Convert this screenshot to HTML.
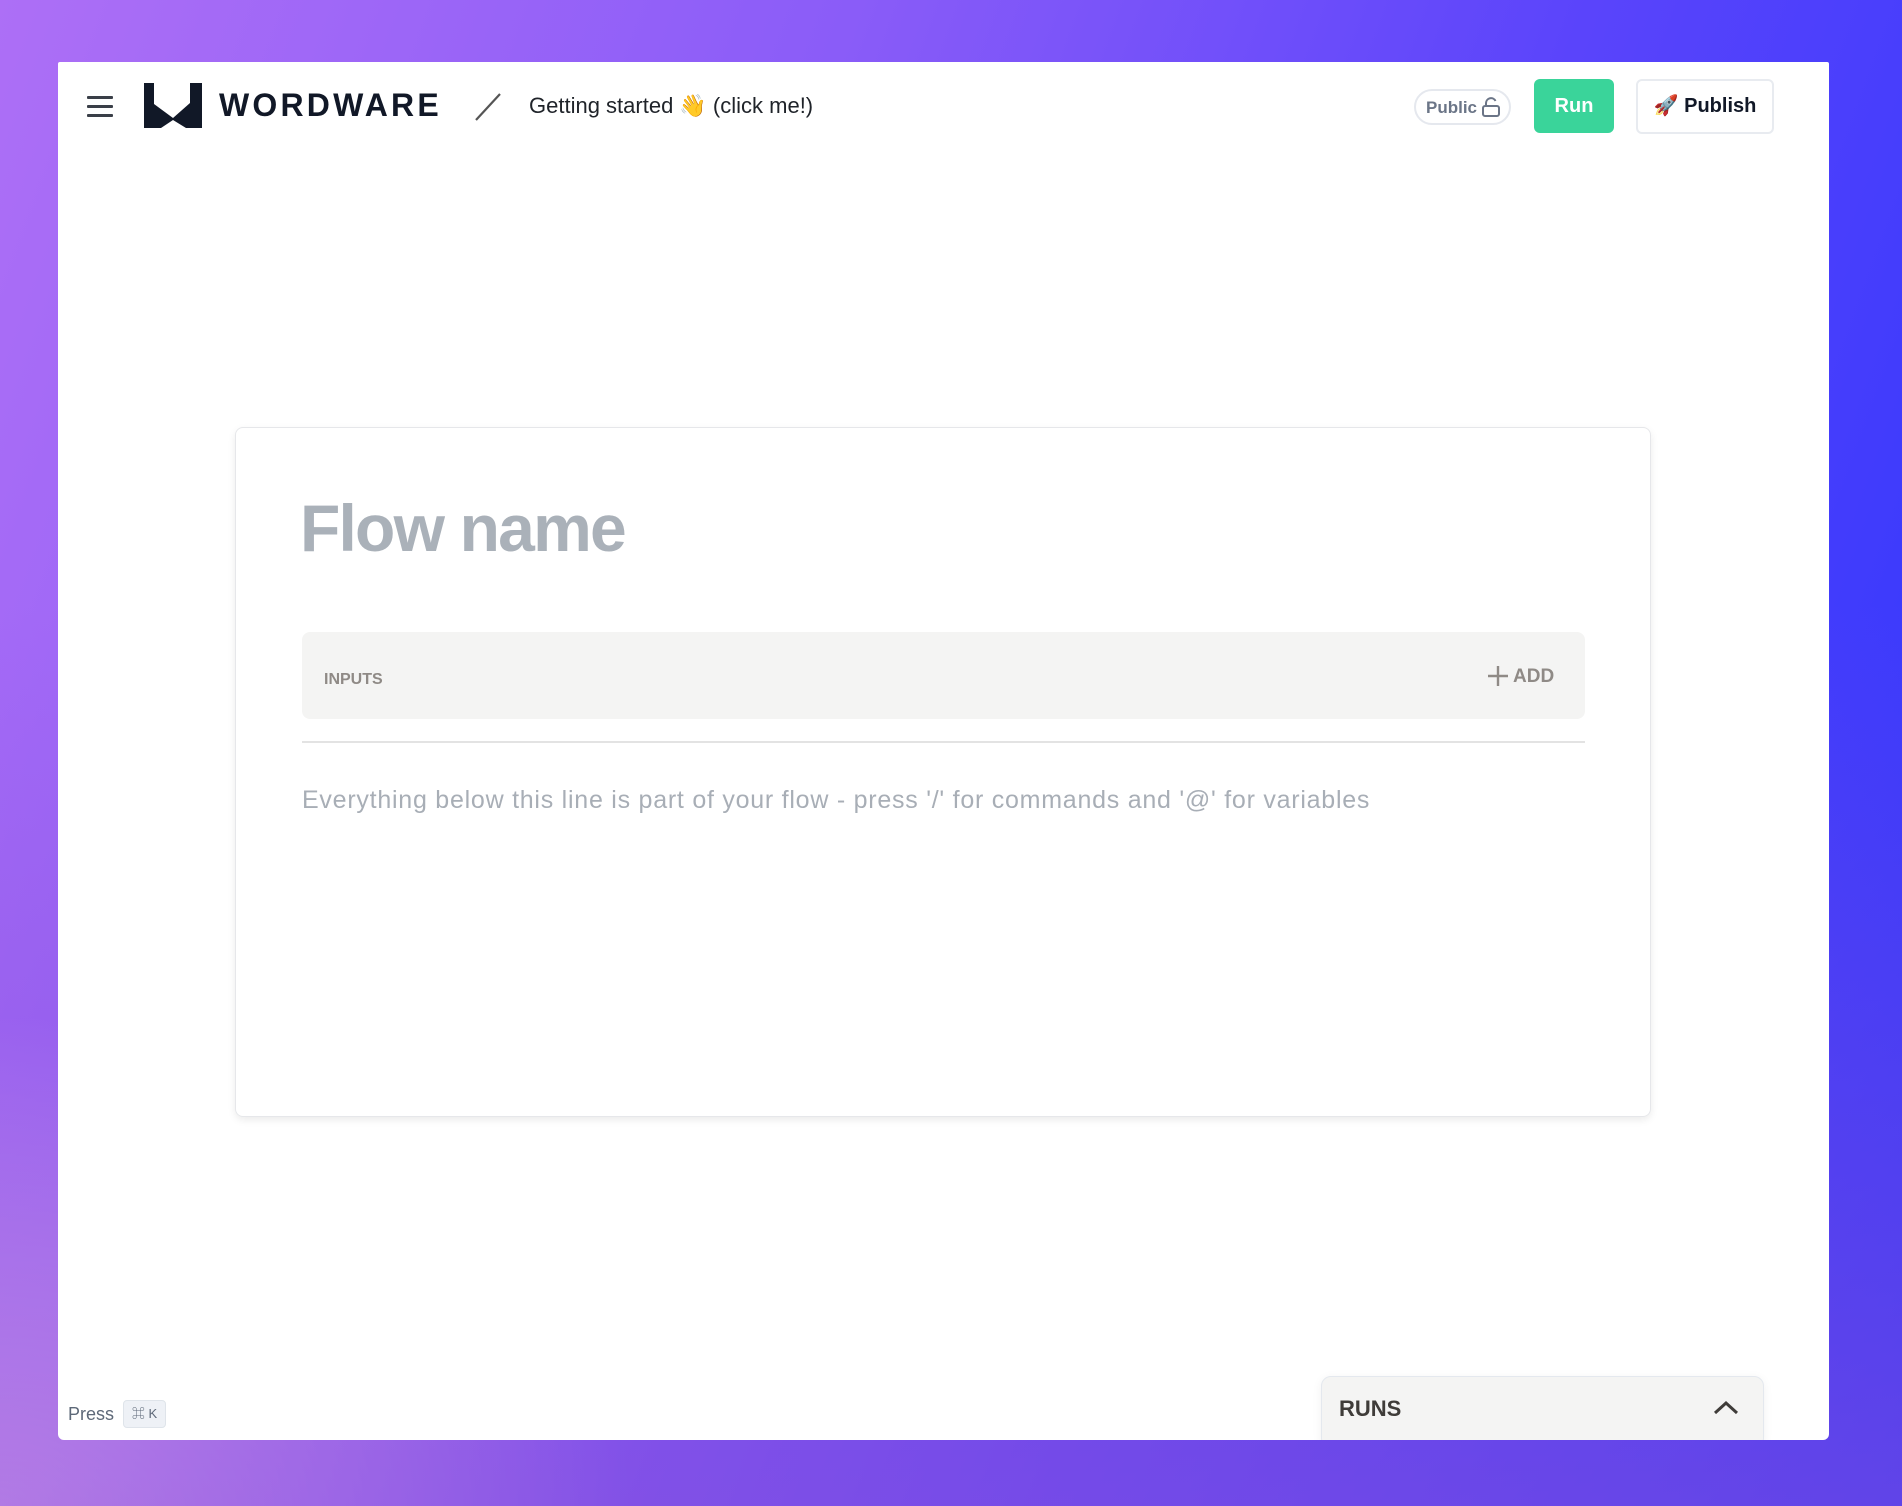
<!DOCTYPE html>
<html><head><meta charset="utf-8"><style>
*{box-sizing:border-box;margin:0;padding:0}
html,body{width:1902px;height:1506px;overflow:hidden}
body{position:relative;font-family:"Liberation Sans","Noto Sans CJK JP",sans-serif;
background:
radial-gradient(ellipse 900px 700px at 0% 100%, rgba(226,176,245,0.95), rgba(226,176,245,0) 70%),
linear-gradient(110deg,#ad6ff6 0%,#8a5cf8 35%,#5a44fb 65%,#2b35fd 100%);}
.bot{position:absolute;left:0;top:0;width:1902px;height:1506px;background:linear-gradient(180deg,rgba(140,80,215,0) 40%,rgba(140,80,215,0.55) 100%)}
.win{position:absolute;left:58px;top:62px;width:1771px;height:1378px;background:#fff;border-radius:2px 2px 6px 6px;overflow:hidden}
.a{position:absolute}
.ham span{position:absolute;left:0;width:26px;height:3px;background:#3a3f48;border-radius:1px}
.logo{font-weight:700;font-size:32px;letter-spacing:3.2px;color:#111827}
.card{position:absolute;left:177px;top:365px;width:1416px;height:690px;border:1px solid #e6e7ea;border-radius:8px;box-shadow:0 3px 8px rgba(0,0,0,0.08)}
</style></head><body>
<div class="bot"></div>
<div class="win">
  <div class="a ham" style="left:29px;top:34px;width:26px;height:22px">
    <span style="top:0"></span><span style="top:9px"></span><span style="top:18px"></span>
  </div>
  <svg class="a" style="left:82px;top:16px" width="70" height="54" viewBox="0 0 70 54">
    <path d="M4 5H14V26L33 40L50 25V5H62V50H46L33 42L21 50H4Z" fill="#111827"/>
  </svg>
  <div class="a logo" style="left:161px;top:25px">WORDWARE</div>
  <svg class="a" style="left:416px;top:30px" width="28" height="30"><line x1="2" y1="28" x2="26" y2="2" stroke="#555" stroke-width="2.2"/></svg>
  <div class="a" style="left:471px;top:31px;font-size:22px;color:#1f2329">Getting started 👋 (click me!)</div>
  <div class="a" style="left:1356px;top:27px;width:97px;height:36px;border:2px solid #e5e8ee;border-radius:18px;font-size:17px;font-weight:700;color:#6b7587;padding:7px 0 0 10px">Public
    <svg style="position:absolute;left:64px;top:5px" width="22" height="22" viewBox="0 0 22 22" fill="none" stroke="#6b7587" stroke-width="2"><rect x="3" y="10" width="16" height="10" rx="2"/><path d="M6 10V7a5 5 0 0 1 9.5-2"/></svg>
  </div>
  <div class="a" style="left:1476px;top:17px;width:80px;height:54px;background:#3ad49a;border-radius:6px;color:#fff;font-size:20px;font-weight:700;text-align:center;line-height:54px">Run</div>
  <div class="a" style="left:1578px;top:17px;width:138px;height:55px;border:2px solid #e8ebf0;border-radius:6px;color:#111827;font-size:20px;font-weight:700;text-align:center;line-height:51px">🚀 Publish</div>

  <div class="card">
    <div class="a" style="left:64px;top:62px;font-size:66px;font-weight:700;color:#aab1b9;letter-spacing:-1.8px;white-space:nowrap">Flow name</div>
    <div class="a" style="left:66px;top:204px;width:1283px;height:87px;background:#f4f4f3;border-radius:8px">
      <div class="a" style="left:22px;top:39px;font-size:16px;font-weight:700;color:#8f8a86">INPUTS</div>
      <svg class="a" style="left:1185px;top:33px" width="22" height="22"><path d="M11 1V21M1 11H21" stroke="#8f8a86" stroke-width="2.4"/></svg>
      <div class="a" style="left:1211px;top:34px;font-size:19px;font-weight:700;color:#8f8a86">ADD</div>
    </div>
    <div class="a" style="left:66px;top:313px;width:1283px;height:2px;background:#e3e3e3"></div>
    <div class="a" style="left:66px;top:358px;font-size:25px;letter-spacing:0.75px;color:#a8aeb6;white-space:nowrap">Everything below this line is part of your flow - press '/' for commands and '@' for variables</div>
  </div>

  <div class="a" style="left:10px;top:1342px;font-size:18px;color:#5d6878">Press</div>
  <div class="a" style="left:65px;top:1338px;width:43px;height:28px;background:#eef1f6;border:1px solid #dfe4ea;border-radius:4px;font-size:13px;color:#5d6878;text-align:center;line-height:26px">⌘ K</div>

  <div class="a" style="left:1263px;top:1314px;width:443px;height:72px;background:#f4f4f3;border:1px solid #e4e8ee;border-radius:10px;box-shadow:0 2px 10px rgba(0,0,0,0.06)">
    <div class="a" style="left:17px;top:19px;font-size:22px;font-weight:700;color:#3f3c39">RUNS</div>
    <svg class="a" style="left:390px;top:21px" width="28" height="20"><path d="M3 15L14 5L25 15" fill="none" stroke="#3f3c39" stroke-width="3"/></svg>
  </div>
</div>
</body></html>
